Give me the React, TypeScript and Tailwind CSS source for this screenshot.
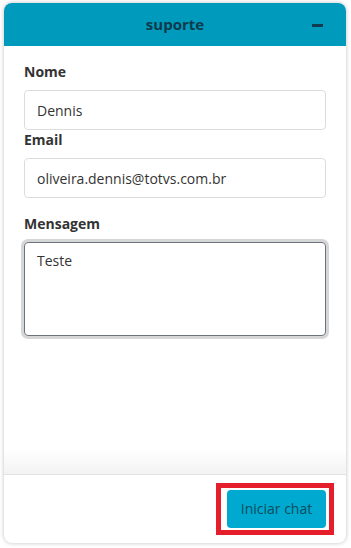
export default function App() {
    return (
        <div className="h-[548px] w-[351px] bg-white pl-1 pt-[3px] font-['Open_Sans',sans-serif]">
            <div className="flex h-[540px] w-[342px] flex-col overflow-hidden rounded-lg bg-white shadow-[0_0_4px_rgba(0,0,0,0.25)]">
                {/* Header */}
                <header className="relative flex h-[43px] shrink-0 items-center justify-center bg-[#009abd]">
                    <span className="text-[15px] font-bold text-[#0e3a4c]">suporte</span>
                    {/* minimize */}
                    <span className="absolute right-[23px] top-[21px] block h-[3px] w-[11px] bg-[#0f3c50]" />
                </header>

                {/* Form */}
                <div className="flex flex-1 flex-col">
                    <div className="flex flex-col px-5 pt-4">
                        <label className="text-sm leading-5 font-bold text-[#333]">Nome</label>
                        <input
                            defaultValue="Dennis"
                            className="mt-2 h-10 rounded border border-[#dcdcdc] px-3 text-sm text-[#333] outline-none"
                        />
                        <label className="text-sm leading-5 font-bold text-[#333]">Email</label>
                        <input
                            defaultValue="oliveira.dennis@totvs.com.br"
                            className="mt-2 h-10 rounded border border-[#dcdcdc] px-3 text-sm text-[#333] outline-none"
                        />
                        <label className="mt-4 text-sm leading-5 font-bold text-[#333]">Mensagem</label>
                        <textarea
                            defaultValue="Teste"
                            className="mt-2 h-[94px] resize-none rounded border border-[#6b737c] px-3 py-2 text-sm text-[#333] shadow-[0_0_0_3px_#d6d6d6] outline-none"
                        />
                    </div>
                    <div className="flex-1" />
                    <div className="h-6 bg-gradient-to-b from-white to-[#f3f3f3]" />
                </div>

                {/* Footer */}
                <footer className="flex h-[69px] shrink-0 items-center justify-end border-t border-[#e2e2e2] pr-3">
                    <div className="border-[5px] border-[#e41e2a] pb-[2px] pl-[6px] pr-[3px] pt-[2px]">
                        <button className="block h-[38px] w-[99px] rounded bg-[#00a9d0] text-sm text-[#0d4d5a]">
                            Iniciar chat
                        </button>
                    </div>
                </footer>
            </div>
        </div>
    );
}
